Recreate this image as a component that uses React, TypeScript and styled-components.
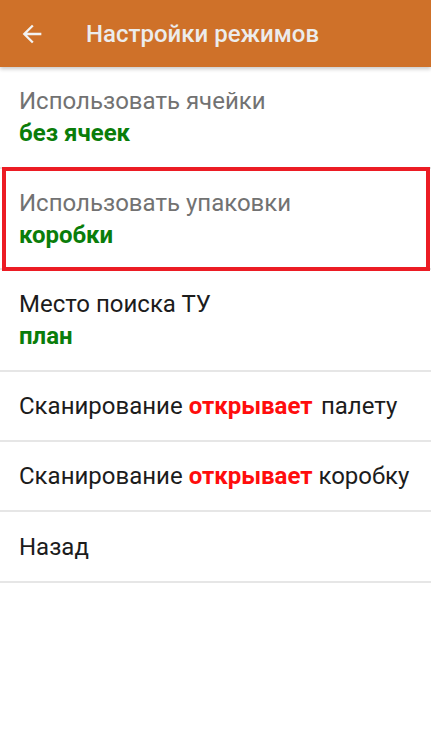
import styled, { createGlobalStyle } from 'styled-components';

const GlobalStyle = createGlobalStyle`
    html, body {
        margin: 0;
        padding: 0;
        background: #ffffff;
    }
    body {
        font-family: Roboto, 'Noto Sans', 'Liberation Sans', sans-serif;
        -webkit-font-smoothing: antialiased;
    }
`;

const Screen = styled.div`
    width: 431px;
    min-height: 739px;
    background: #ffffff;
    display: flex;
    flex-direction: column;
`;

const Toolbar = styled.header`
    position: relative;
    height: 67px;
    flex-shrink: 0;
    background: #cf7129;
    display: flex;
    align-items: center;
    padding-left: 18px;
    box-shadow: 0 2px 4px rgba(0, 0, 0, 0.22);
    z-index: 1;
`;

const BackButton = styled.button`
    width: 28px;
    height: 28px;
    padding: 0;
    border: none;
    background: transparent;
    color: #f2f2f2;
    display: flex;
    align-items: center;
    justify-content: center;
    cursor: pointer;
`;

const Title = styled.h1`
    margin: 0 0 0 40px;
    font-size: 24px;
    font-weight: 500;
    color: #ececec;
`;

const List = styled.ul`
    list-style: none;
    margin: 0;
    padding: 0;
`;

const Row = styled.li<{ $highlighted?: boolean; $double?: boolean }>`
    position: relative;
    display: flex;
    flex-direction: column;
    justify-content: center;
    height: ${(p) => (p.$double ? 99.7 : 68.2)}px;
    padding: 0 19px;
    border-bottom: 2px solid #e6e6e6;
    font-size: 24px;
    line-height: 32px;
    color: #1c1c1c;
    white-space: nowrap;

    ${(p) =>
        p.$highlighted &&
        `
        &::after {
            content: '';
            position: absolute;
            left: 2px;
            right: 1px;
            top: -2px;
            bottom: -3px;
            border: 4px solid #ec1c24;
            pointer-events: none;
        }
    `}
`;

const Label = styled.span<{ $muted?: boolean }>`
    color: ${(p) => (p.$muted ? '#727272' : '#1c1c1c')};
`;

const Value = styled.span`
    color: #0a7d0a;
    font-weight: 700;
`;

const Accent = styled.span`
    color: #ff0d0d;
    font-weight: 700;
`;

const ArrowBack = () => (
    <svg width="28" height="28" viewBox="0 0 24 24" fill="currentColor">
        <path d="M20 11H7.83l5.59-5.59L12 4l-8 8 8 8 1.41-1.41L7.83 13H20v-2z" />
    </svg>
);

export default function App() {
    return (
        <>
            <GlobalStyle />
            <Screen>
                <Toolbar>
                    <BackButton aria-label="Назад">
                        <ArrowBack />
                    </BackButton>
                    <Title>Настройки режимов</Title>
                </Toolbar>

                <List>
                    <Row $double>
                        <Label $muted>Использовать ячейки</Label>
                        <Value>без ячеек</Value>
                    </Row>
                    <Row $double $highlighted>
                        <Label $muted>Использовать упаковки</Label>
                        <Value>коробки</Value>
                    </Row>
                    <Row $double>
                        <Label>Место поиска ТУ</Label>
                        <Value>план</Value>
                    </Row>
                    <Row>
                        <Label>
                            Сканирование <Accent>открывает</Accent> {'\u200A'}палету
                        </Label>
                    </Row>
                    <Row>
                        <Label>
                            Сканирование <Accent>открывает</Accent> коробку
                        </Label>
                    </Row>
                    <Row>
                        <Label>Назад</Label>
                    </Row>
                </List>
            </Screen>
        </>
    );
}
